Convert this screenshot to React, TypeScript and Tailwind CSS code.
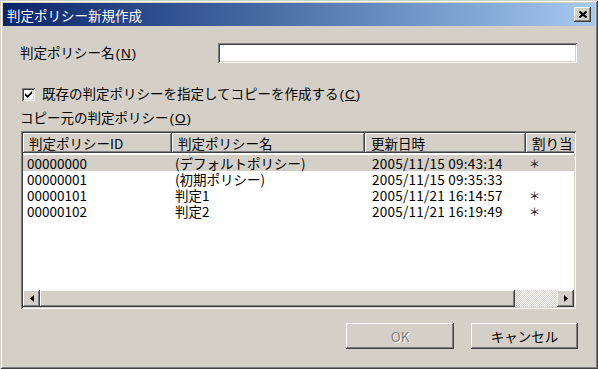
import React from 'react';

const raised =
  'shadow-[inset_-1px_-1px_#404040,inset_1px_1px_#ffffff,inset_-2px_-2px_#808080,inset_2px_2px_#d4d0c8]';
const sunken =
  'shadow-[inset_1px_1px_#808080,inset_-1px_-1px_#ffffff,inset_2px_2px_#404040,inset_-2px_-2px_#d4d0c8]';

const columns = [
  { title: '判定ポリシーID', width: 'w-[149px]', cell: 'pl-[4px]' },
  { title: '判定ポリシー名', width: 'w-[193px]', cell: 'pl-[3px]' },
  { title: '更新日時', width: 'w-[161px]', cell: 'pl-[7px] tracking-[0.25px]' },
  { title: '割り当て', width: 'w-[80px]', cell: 'pl-[3px] text-[11px]' },
];

const policies = [
  { id: '00000000', name: '(デフォルトポリシー)', updated: '2005/11/15 09:43:14', assigned: '＊' },
  { id: '00000001', name: '(初期ポリシー)', updated: '2005/11/15 09:35:33', assigned: '' },
  { id: '00000101', name: '判定1', updated: '2005/11/21 16:14:57', assigned: '＊' },
  { id: '00000102', name: '判定2', updated: '2005/11/21 16:19:49', assigned: '＊' },
];

// mnemonic like (N), drawn a little wider than the default parens
const Key: React.FC<{ k: string }> = ({ k }) => (
  <span className="font-['Liberation_Sans',sans-serif] tracking-[1px] pl-[1px]">
    (<span className="underline">{k}</span>)
  </span>
);

const ArrowButton: React.FC<{ dir: 'left' | 'right' }> = ({ dir }) => (
  <div className={`w-[17px] h-[17px] bg-[#d4d0c8] flex items-center justify-center ${raised}`}>
    <svg width="4" height="7" viewBox="0 0 4 7">
      {dir === 'left' ? <path d="M4 0 L0 3.5 L4 7 Z" fill="#000" /> : <path d="M0 0 L4 3.5 L0 7 Z" fill="#000" />}
    </svg>
  </div>
);

const App: React.FC = () => {
  return (
    <div
      className={`w-[598px] h-[369px] bg-[#d4d0c8] p-[3px] flex flex-col text-[13.5px] leading-[14px] text-black font-['Noto_Sans_CJK_JP',sans-serif] shadow-[inset_1px_1px_#d4d0c8,inset_-1px_-1px_#404040,inset_2px_2px_#ffffff,inset_-2px_-2px_#808080]`}
    >
      {/* title bar */}
      <div className="h-[23px] flex items-center justify-between pl-[4px] bg-linear-to-r from-[#0a246a] to-[#a6caf0]">
        <span className="text-white text-[13.5px]">判定ポリシー新規作成</span>
        <div className={`w-[17px] h-[15px] mr-[4px] bg-[#d4d0c8] flex items-center justify-center ${raised}`}>
          <svg width="8" height="7" viewBox="0 0 8 7">
            <path d="M0.5 0.5 L7.5 6.5 M7.5 0.5 L0.5 6.5" stroke="#000" strokeWidth="2" />
          </svg>
        </div>
      </div>

      <div className="flex-1 flex flex-col px-[17px] pt-[17px]">
        {/* name row */}
        <div className="flex items-center h-[20px]">
          <span className="w-[198px] whitespace-nowrap">
            判定ポリシー名<Key k="N" />
          </span>
          <div className={`flex-1 h-[20px] mr-[1px] bg-white ${sunken}`} />
        </div>

        {/* checkbox row */}
        <div className="flex items-center mt-[24px] h-[14px] ml-[2px] gap-[7px]">
          <div className={`w-[13px] h-[13px] bg-white flex items-center justify-center ${sunken}`}>
            <svg width="7" height="7" viewBox="0 0 7 7">
              <path d="M0 2 L0 4.5 L2.5 7 L7 2.5 L7 0 L2.5 4.5 Z" fill="#000" />
            </svg>
          </div>
          <span className="whitespace-nowrap">
            既存の判定ポリシーを指定してコピーを作成する<Key k="C" />
          </span>
        </div>

        <div className="mt-[9px] h-[14px] whitespace-nowrap">
          コピー元の判定ポリシー<Key k="O" />
        </div>

        {/* list view */}
        <div className={`mt-[7px] ml-[1px] mr-[2px] h-[178px] p-[2px] bg-white flex flex-col ${sunken}`}>
          <div className="flex-1 overflow-hidden flex flex-col">
            <div className="flex h-[20px] shrink-0">
              {columns.map((c) => (
                <div
                  key={c.title}
                  className={`${c.width} shrink-0 h-[20px] bg-[#d4d0c8] pl-[6px] flex items-center whitespace-nowrap overflow-hidden ${raised}`}
                >
                  {c.title}
                </div>
              ))}
            </div>
            <div className="pt-[2px]">
              {policies.map((p, i) => (
                <div key={p.id} className={`flex h-[16px] leading-[16px] items-center ${i === 0 ? 'bg-[#d4d0c8]' : ''}`}>
                  {[p.id, p.name, p.updated, p.assigned].map((v, j) => (
                    <div key={j} className={`${columns[j].width} shrink-0 whitespace-nowrap ${columns[j].cell}`}>
                      {v}
                    </div>
                  ))}
                </div>
              ))}
            </div>
          </div>

          {/* horizontal scrollbar */}
          <div className="flex h-[17px] shrink-0">
            <ArrowButton dir="left" />
            <div className={`w-[475px] h-[17px] bg-[#d4d0c8] ${raised}`} />
            <div className="flex-1 h-[17px] bg-[repeating-conic-gradient(#ffffff_0_25%,#d4d0c8_0_50%)] bg-[length:2px_2px]" />
            <ArrowButton dir="right" />
          </div>
        </div>

        {/* buttons */}
        <div className="flex justify-end gap-[17px] mt-[14px]">
          <div
            className={`w-[108px] h-[26px] flex items-center justify-center bg-[#d4d0c8] text-[#808080] [text-shadow:1px_1px_#ffffff] ${raised}`}
          >
            OK
          </div>
          <div className={`w-[107px] h-[26px] flex items-center justify-center bg-[#d4d0c8] ${raised}`}>
            キャンセル
          </div>
        </div>
      </div>
    </div>
  );
};

export default App;
